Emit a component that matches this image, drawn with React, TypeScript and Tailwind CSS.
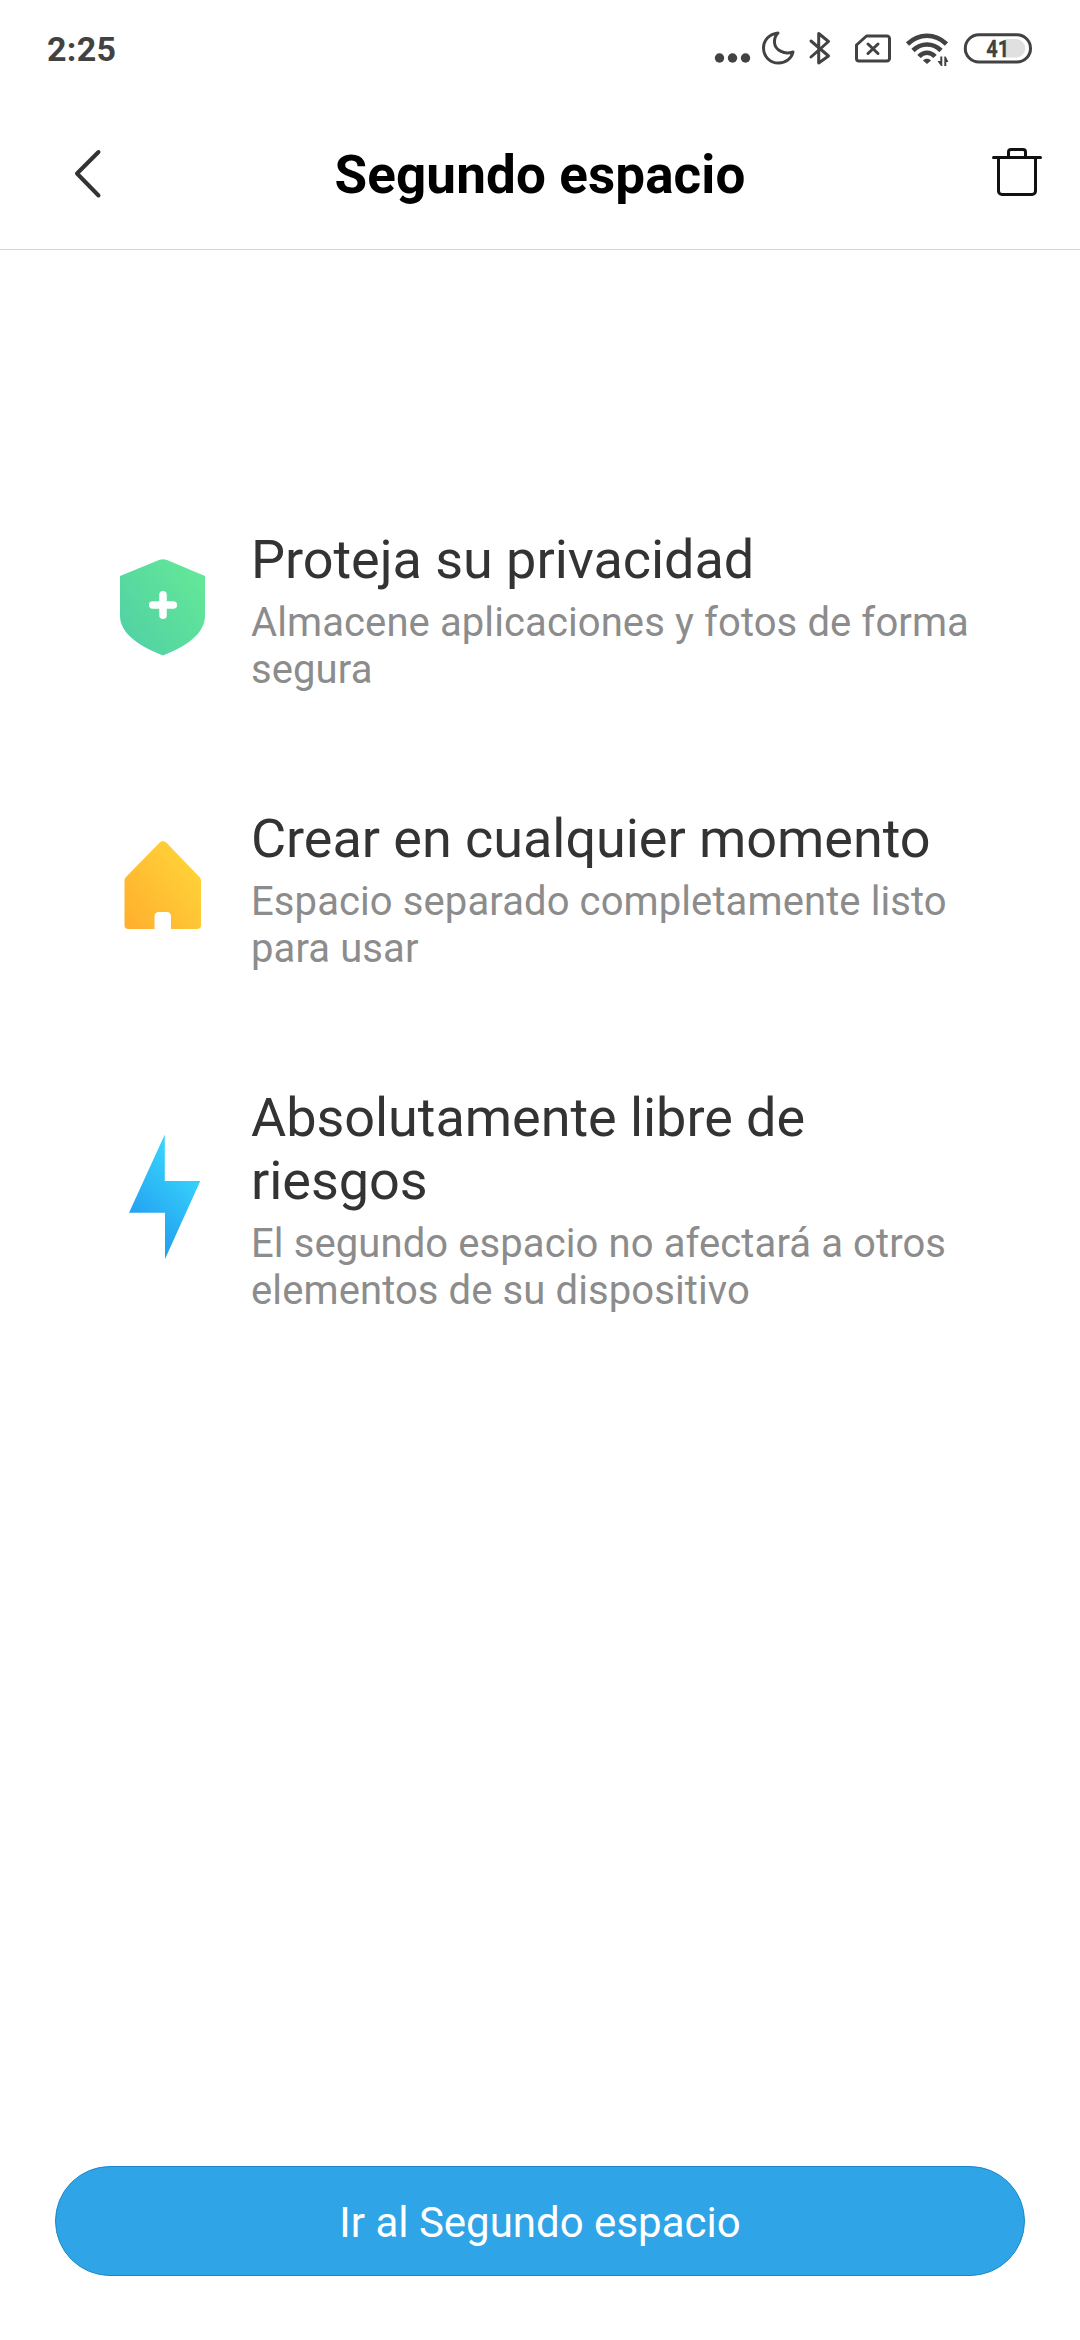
import type { ReactNode } from "react";

function StatusBar() {
  return (
    <div className="flex h-[96px] shrink-0 items-center justify-between pt-[1px] pl-[47px] pr-[47px] text-[#424242]">
      <span className="text-[34px] leading-[40px] font-bold tracking-[0.3px]">2:25</span>
      <svg width="320" height="40" viewBox="713 28.500 320 40" fill="none" stroke="#424242" strokeWidth="3" strokeLinecap="round" strokeLinejoin="round">
        <g fill="#424242" stroke="none">
          <circle cx="719.5" cy="57.5" r="4.7" />
          <circle cx="732.5" cy="57.5" r="4.7" />
          <circle cx="745.5" cy="57.5" r="4.7" />
        </g>
        <path d="M778 32.500C769 33.500 763.500 40 763.500 47.500C763.500 56 770 62.500 778.500 62.500C786 62.500 791.500 58 793 51.500C784 54.500 775 49.500 774.500 42C774.300 38 775.500 35 778 32.500Z" />
        <path d="M811 40.500L828.500 55.500L818.700 62.500V33L828.500 41L811 56.500" />
        <path d="M866.500 35.500H887A2.500 2.500 0 0 1 889.500 38V58A2.500 2.500 0 0 1 887 60.500H859A2.500 2.500 0 0 1 856.500 58V44.500ZM868 43.500L878 53M878 43.500L868 53" />
        <g strokeWidth="4.600" strokeLinecap="butt">
          <path d="M907.500 43.500C919 32.500 935 32.500 946.500 43.500" />
          <path d="M913 50C921 42 933 42 941 50" />
          <path d="M919 56C923.500 51 930.500 51 935 56" />
        </g>
        <path d="M923 60C925 57.700 929 57.700 931 60L927 63.500Z" fill="#424242" stroke="none" />
        <path d="M940.300 56H942.300V65.500H941L937.500 60.500H940.300ZM944.300 65.500V56H945.700L948.500 61.500H946.300V65.500Z" fill="#424242" stroke="none" />
        <path d="M1006 38.500H1016A9.200 9.200 0 0 1 1016 57H1006Z" fill="#e0e0e0" stroke="none" />
        <rect x="965.300" y="34.300" width="65.200" height="27.200" rx="13.600" />
        <text x="986.300" y="56.700" fill="#424242" stroke="#424242" strokeWidth="0.300" fontSize="24.500" fontWeight="700" textLength="23" lengthAdjust="spacingAndGlyphs">41</text>
      </svg>
    </div>
  );
}

function Header() {
  return (
    <header className="grid h-[154px] shrink-0 grid-cols-[1fr_auto_1fr] items-center border-b border-[#d4d4d4] px-[36px]">
      <button aria-label="Volver" className="ml-[36px] justify-self-start">
        <svg className="block" width="32" height="52" viewBox="72 147 32 52" fill="none" stroke="#333" strokeWidth="4" strokeLinecap="round" strokeLinejoin="round">
          <path d="M98.500 152L77 173.500L98.500 195.500" />
        </svg>
      </button>
      <h1 className="pt-[4px] text-[53px] leading-[62px] font-bold tracking-[0.1px] text-black">Segundo espacio</h1>
      <button aria-label="Eliminar" className="justify-self-end">
        <svg className="-mr-[1px] -mt-[1px] block" width="54" height="54" viewBox="990 145 54 54" fill="none" stroke="#111" strokeWidth="3" strokeLinecap="round" strokeLinejoin="round">
          <path d="M992.500 157.500H1039.500M997.500 158V191A3.500 3.500 0 0 0 1001 194.500H1031A3.500 3.500 0 0 0 1034.500 191V158M1007.500 157V152A2.500 2.500 0 0 1 1010 149.500H1022A2.500 2.500 0 0 1 1024.500 152V157" />
        </svg>
      </button>
    </header>
  );
}

function ShieldIcon() {
  return (
    <svg className="block" width="130" height="130" viewBox="0 0 130 130">
      <defs>
        <linearGradient id="shield" x1="0.1" y1="0.85" x2="0.9" y2="0.2">
          <stop stopColor="#52d2a4" />
          <stop offset="1" stopColor="#62e698" />
        </linearGradient>
      </defs>
      <path d="M20 36L59 20Q63 18.300 67 20L105 36V76C105 94 85 107 63 115.500C41 107 20 94 20 76Z" fill="url(#shield)" />
      <path d="M63 54.700V75.300M52.700 65H73.300" stroke="#fff" strokeWidth="7.500" strokeLinecap="round" />
    </svg>
  );
}

function HomeIcon() {
  return (
    <svg className="block" width="130" height="130" viewBox="0 -1 130 130">
      <defs>
        <linearGradient id="home" x1="0.05" y1="0.95" x2="0.85" y2="0.25">
          <stop stopColor="#ffb02e" />
          <stop offset="1" stopColor="#ffd138" />
        </linearGradient>
      </defs>
      <path d="M24.500 60.500Q24.500 58.500 26 57L59.700 22.500Q63 19.300 66.300 22.500L99.500 57Q101 58.500 101 60.500V105Q101 109 97 109H71V96.500Q71 92 66.500 92H59Q54.500 92 54.500 96.500V109H28.500Q24.500 109 24.500 105Z" fill="url(#home)" />
    </svg>
  );
}

function BoltIcon() {
  return (
    <svg className="block" width="130" height="170" viewBox="0 0 130 170">
      <defs>
        <linearGradient id="bolt" x1="0.3" y1="0.85" x2="0.7" y2="0.15">
          <stop stopColor="#229ef0" />
          <stop offset="1" stopColor="#38d6fc" />
        </linearGradient>
      </defs>
      <path d="M64.800 24.500V71H100.300L65 149V102.700H29Z" fill="url(#bolt)" />
    </svg>
  );
}

function Feature({ icon, title, lines }: { icon: ReactNode; title: ReactNode; lines: [string, string] }) {
  return (
    <li className="flex items-center">
      <div className="-mt-[31px] -mb-[20px] w-[151px] shrink-0">{icon}</div>
      <div>
        <h2 className="text-[54px] leading-[63px] tracking-[-0.05px] text-[#333]">{title}</h2>
        <p className="mt-[8px] text-[40px] leading-[47px] tracking-[0.1px] whitespace-nowrap text-[#8c8c8c]">
          {lines[0]}
          <br />
          {lines[1]}
        </p>
      </div>
    </li>
  );
}

export default function App() {
  return (
    <div className="flex h-[2340px] w-[1080px] flex-col bg-white font-[Roboto,sans-serif]">
      <StatusBar />
      <Header />
      <main className="flex-1 pt-[278px] pl-[100px]">
        <ul className="flex flex-col gap-[114px]">
          <Feature icon={<ShieldIcon />} title="Proteja su privacidad" lines={["Almacene aplicaciones y fotos de forma", "segura"]} />
          <Feature icon={<HomeIcon />} title="Crear en cualquier momento" lines={["Espacio separado completamente listo", "para usar"]} />
          <Feature
            icon={<BoltIcon />}
            title={
              <>
                Absolutamente libre de
                <br />
                riesgos
              </>
            }
            lines={["El segundo espacio no afectará a otros", "elementos de su dispositivo"]}
          />
        </ul>
      </main>
      <footer className="px-[55px] pb-[64px]">
        <button className="block h-[110px] w-full rounded-full border border-[#1b87c9] bg-[#2fa5e7] pt-[3px] text-[42px] text-white">
          Ir al Segundo espacio
        </button>
      </footer>
    </div>
  );
}
